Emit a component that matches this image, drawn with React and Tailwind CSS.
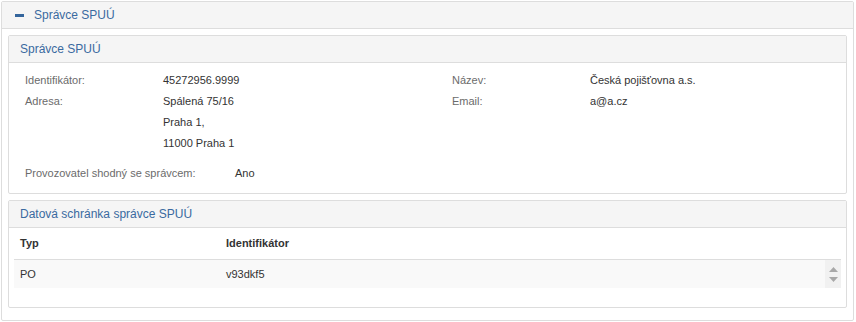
function Row({ label, children }) {
  return (
    <div className="flex">
      <div className="w-[138px] shrink-0 text-[#6b6b6b]">{label}</div>
      <div className="text-[#333]">{children}</div>
    </div>
  );
}

function Panel({ title, children }) {
  return (
    <div className="border border-[#ddd] rounded-[2px] bg-white">
      <div className="h-[27px] flex items-center px-[11px] bg-[#f5f5f5] border-b border-[#ddd] text-[12px] text-[#3a6aa0]">
        {title}
      </div>
      {children}
    </div>
  );
}

export default function App() {
  return (
    <div className="p-px font-['Liberation_Sans',Arial,sans-serif] text-[11px]">
      <div className="w-[853px] border border-[#ddd] rounded-[2px] bg-white">
        <div className="h-[27px] flex items-center gap-[10px] px-[13px] bg-[#f5f5f5] border-b border-[#ddd] text-[12px] text-[#3a6aa0]">
          <span className="block w-[9px] h-[3px] bg-[#34659c]" />
          <span>Správce SPUÚ</span>
        </div>

        <div className="p-[6px] pb-[12px] flex flex-col gap-[6px]">
          <Panel title="Správce SPUÚ">
            <div className="pl-[16px] pt-[7px] pb-[9px]">
              <div className="grid grid-cols-[427px_1fr]">
                <div className="flex flex-col">
                  <div className="h-[21px] flex items-center"><Row label="Identifikátor:">45272956.9999</Row></div>
                  <div className="h-[21px] flex items-center"><Row label="Adresa:">Spálená 75/16</Row></div>
                  <div className="h-[21px] flex items-center"><Row label="">Praha 1,</Row></div>
                  <div className="h-[21px] flex items-center"><Row label="">11000 Praha 1</Row></div>
                </div>
                <div className="flex flex-col">
                  <div className="h-[21px] flex items-center"><Row label="Název:">Česká pojišťovna a.s.</Row></div>
                  <div className="h-[21px] flex items-center"><Row label="Email:">a@a.cz</Row></div>
                </div>
              </div>
              <div className="mt-[9px] h-[21px] flex items-center">
                <div className="w-[210px] text-[#6b6b6b]">Provozovatel shodný se správcem:</div>
                <div className="text-[#333]">Ano</div>
              </div>
            </div>
          </Panel>

          <Panel title="Datová schránka správce SPUÚ">
            <div className="px-[5px] pb-[19px]">
              <div className="h-[32px] flex items-center border-b border-[#ddd] font-bold text-[#333]">
                <div className="w-[212px] pl-[6px]">Typ</div>
                <div>Identifikátor</div>
              </div>
              <div className="h-[28px] flex items-center bg-[#f9f9f9] text-[#333]">
                <div className="w-[212px] pl-[6px]">PO</div>
                <div className="flex-1">v93dkf5</div>
                <div className="w-[16px] h-full flex flex-col items-center justify-center gap-[5px] bg-[#f1f1f1]">
                  <svg width="9" height="5" viewBox="0 0 9 5"><path d="M4.5 0L9 5H0z" fill="#a8a8a8" /></svg>
                  <svg width="9" height="5" viewBox="0 0 9 5"><path d="M0 0h9L4.5 5z" fill="#a8a8a8" /></svg>
                </div>
              </div>
            </div>
          </Panel>
        </div>
      </div>
    </div>
  );
}
